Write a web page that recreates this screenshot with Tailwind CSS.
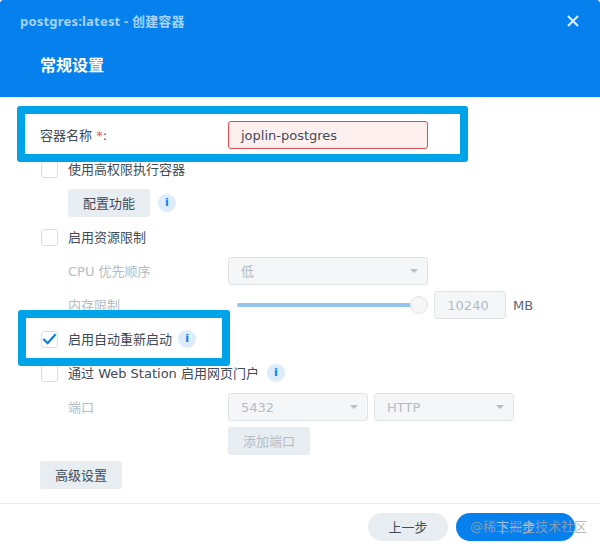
<!DOCTYPE html>
<html lang="zh">
<head>
  <meta charset="UTF-8" />
  <title>postgres:latest - 创建容器</title>
  <script src="https://cdn.jsdelivr.net/npm/@tailwindcss/browser@4"></script>
</head>
<body class="bg-white">
  <div class="relative w-[600px] h-[550px] overflow-hidden flex flex-col bg-white rounded-[3px] text-[13px] text-[#414b55] font-['DejaVu_Sans','Noto_Sans_CJK_SC',sans-serif]">

    <!-- 顶部 -->
    <header class="h-[97px] shrink-0 bg-[#0580ed] rounded-t-[3px] pl-5 pr-[21px] pt-[12px]">
      <div class="flex items-center justify-between h-[18px]">
        <span class="text-[13px] leading-[18px] font-bold tracking-[0.2px] text-[#a6d3fa] font-['Noto_Sans','Noto_Sans_CJK_SC',sans-serif]">postgres:latest - 创建容器</span>
        <svg width="12" height="12" viewBox="0 0 12 12" fill="none" stroke="#d7ecfd" stroke-width="2.2"><path d="M1 1l10 10M11 1L1 11"/></svg>
      </div>
      <h1 class="mt-[23px] ml-5 text-[16px] leading-[22px] font-bold text-white font-['Noto_Sans_CJK_SC',sans-serif]">常规设置</h1>
    </header>

    <!-- 表单 -->
    <main class="flex-1 flex flex-col gap-[6px] pt-6 pl-10">
      <div class="h-7 flex items-center">
        <label class="w-[188px] pt-[2px]">容器名称 <span class="text-[#f0535c]">*</span>:</label>
        <div class="w-[200px] h-7 px-3 pt-[2px] flex items-center rounded-[3px] border border-[#dd4b50] bg-[#fff0f0]">joplin-postgres</div>
      </div>

      <div class="h-7 flex items-center pl-px">
        <span class="w-[17px] h-[17px] mr-[10px] rounded-[3px] border border-[#d9dfe5] bg-white"></span>
        <span class="pt-[2px]">使用高权限执行容器</span>
      </div>

      <div class="h-7 flex items-center pl-7">
        <button class="w-[82px] h-7 pt-[2px] rounded-[3px] bg-[#e8edf2]">配置功能</button>
        <span class="ml-2 w-[18px] h-[18px] rounded-full bg-[#dcecfb] flex items-center justify-center text-[11px] font-bold text-[#0580ed]">i</span>
      </div>

      <div class="h-7 flex items-center pl-px">
        <span class="w-[17px] h-[17px] mr-[10px] rounded-[3px] border border-[#d9dfe5] bg-white"></span>
        <span class="pt-[2px]">启用资源限制</span>
      </div>

      <div class="h-7 flex items-center pl-7 text-[#b4bcc4]">
        <label class="w-[160px] pt-[2px]">CPU 优先顺序</label>
        <div class="w-[200px] h-7 pl-3 pr-[9px] flex items-center justify-between rounded-[3px] border border-[#dfe4e9] bg-[#f4f6f8]">
          <span class="pt-[2px]">低</span>
          <span class="w-0 h-0 border-x-[4px] border-x-transparent border-t-[4px] border-t-[#b4bcc4]"></span>
        </div>
      </div>

      <div class="h-7 flex items-center pl-7 text-[#b4bcc4]">
        <label class="w-[169px] pt-[2px]">内存限制</label>
        <div class="relative w-[191px] h-[18px] flex items-center">
          <div class="w-full h-1 rounded-full bg-[#93c5ec]"></div>
          <span class="absolute right-0 w-[18px] h-[18px] rounded-full border border-[#dfe4e9] bg-[#f4f6f8]"></span>
        </div>
        <div class="ml-[6px] w-[72px] h-7 pt-[2px] pr-1 flex items-center justify-center rounded-[3px] border border-[#dfe4e9] bg-[#f4f6f8]">10240</div>
        <span class="ml-[7px] pt-[2px] text-[#5d6770]">MB</span>
      </div>

      <div class="h-7 flex items-center pl-px">
        <span class="w-[17px] h-[17px] mr-[10px] rounded-[3px] border border-[#d9dfe5] bg-white flex items-center justify-center">
          <svg width="16" height="14" viewBox="0 0 16 14" fill="none" stroke="#0f7fdc" stroke-width="2.4"><path d="M1.5 7l4.5 4.5L14.500 2"/></svg>
        </span>
        <span class="pt-[2px]">启用自动重新启动</span>
        <span class="ml-[6px] w-[18px] h-[18px] rounded-full bg-[#dcecfb] flex items-center justify-center text-[11px] font-bold text-[#0580ed]">i</span>
      </div>

      <div class="h-7 flex items-center pl-px">
        <span class="w-[17px] h-[17px] mr-[10px] rounded-[3px] border border-[#d9dfe5] bg-white"></span>
        <span class="pt-[2px]">通过 Web Station 启用网页门户</span>
        <span class="ml-2 w-[18px] h-[18px] rounded-full bg-[#dcecfb] flex items-center justify-center text-[11px] font-bold text-[#0580ed]">i</span>
      </div>

      <div class="h-7 flex items-center pl-7 text-[#b4bcc4]">
        <label class="w-[160px] pt-[2px]">端口</label>
        <div class="w-[140px] h-7 pl-3 pr-[9px] flex items-center justify-between rounded-[3px] border border-[#dfe4e9] bg-[#f4f6f8]">
          <span class="pt-[2px]">5432</span>
          <span class="w-0 h-0 border-x-[4px] border-x-transparent border-t-[4px] border-t-[#b4bcc4]"></span>
        </div>
        <div class="ml-[6px] w-[140px] h-7 pl-3 pr-[9px] flex items-center justify-between rounded-[3px] border border-[#dfe4e9] bg-[#f4f6f8]">
          <span class="pt-[2px]">HTTP</span>
          <span class="w-0 h-0 border-x-[4px] border-x-transparent border-t-[4px] border-t-[#b4bcc4]"></span>
        </div>
      </div>

      <div class="h-7 flex items-center pl-[188px]">
        <button class="w-[82px] h-7 pt-[2px] rounded-[3px] bg-[#e8edf2] text-[#b4bcc4]">添加端口</button>
      </div>

      <div class="h-7 flex items-center">
        <button class="w-[82px] h-7 pt-[2px] rounded-[3px] bg-[#e8edf2]">高级设置</button>
      </div>
    </main>

    <!-- 底部 -->
    <footer class="h-[47px] shrink-0 border-t border-[#e6eaee] pt-[9px] pr-[25px] flex justify-end items-start gap-2">
      <button class="w-20 h-7 pt-[2px] rounded-full bg-[#e8edf2]">上一步</button>
      <button class="w-[119px] h-7 pt-[2px] rounded-full bg-[#0580ed] text-[#9ccdf6]">下一步</button>
    </footer>

    <!-- 标注框 -->
    <div class="absolute left-[17px] top-[106px] w-[451px] h-[56px] rounded-[3px] border-[8px] border-[#00a2e8]"></div>
    <div class="absolute left-[18px] top-[310px] w-[212px] h-[56px] rounded-[3px] border-[8px] border-[#00a2e8]"></div>

    <!-- 水印 -->
    <span class="absolute left-[470px] top-[517px] text-[13px] leading-[20px] text-[#a5a5a5]/80">@稀土掘金技术社区</span>
  </div>
</body>
</html>
